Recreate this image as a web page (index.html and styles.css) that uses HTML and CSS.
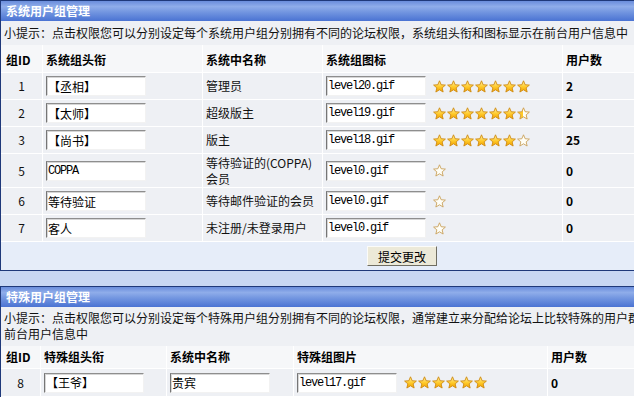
FILE: index.html
```html
<!DOCTYPE html>
<html lang="zh-CN">
<head>
<meta charset="utf-8">
<title>用户组管理</title>
<link rel="stylesheet" href="styles.css">
</head>
<body>
<svg class="defs" width="0" height="0" aria-hidden="true">
  <defs>
    <linearGradient id="g-gold" x1="0" y1="0" x2="0" y2="1">
      <stop offset="0" stop-color="#fff3a6"/>
      <stop offset="0.55" stop-color="#ffc928"/>
      <stop offset="1" stop-color="#f0a000"/>
    </linearGradient>
    <linearGradient id="g-half" x1="0" y1="0" x2="1" y2="0">
      <stop offset="0.5" stop-color="#ffc928"/>
      <stop offset="0.5" stop-color="#fffef6"/>
    </linearGradient>
    <symbol id="star-full" viewBox="0 0 13 13">
      <polygon points="6.5,0.8 8.15,4.73 12.4,5.08 9.16,7.87 10.14,12.02 6.5,9.8 2.86,12.02 3.84,7.87 0.6,5.08 4.85,4.73" fill="url(#g-gold)" stroke="#cf8a10" stroke-width="0.9" stroke-linejoin="round"/>
    </symbol>
    <symbol id="star-half" viewBox="0 0 13 13">
      <polygon points="6.5,0.8 8.15,4.73 12.4,5.08 9.16,7.87 10.14,12.02 6.5,9.8 2.86,12.02 3.84,7.87 0.6,5.08 4.85,4.73" fill="url(#g-half)" stroke="#cf9a40" stroke-width="0.9" stroke-linejoin="round"/>
    </symbol>
    <symbol id="star-empty" viewBox="0 0 13 13">
      <polygon points="6.5,0.8 8.15,4.73 12.4,5.08 9.16,7.87 10.14,12.02 6.5,9.8 2.86,12.02 3.84,7.87 0.6,5.08 4.85,4.73" fill="#fffef6" stroke="#c9a25a" stroke-width="0.9" stroke-linejoin="round"/>
    </symbol>
  </defs>
</svg>

<section class="panel">
  <h2 class="panel-title">系统用户组管理</h2>
  <p class="tip">小提示：点击权限您可以分别设定每个系统用户组分别拥有不同的论坛权限，系统组头衔和图标显示在前台用户信息中</p>
  <div class="grid grid-sys">
    <div class="cell th th-first">组ID</div>
    <div class="cell th">系统组头衔</div>
    <div class="cell th">系统中名称</div>
    <div class="cell th">系统组图标</div>
    <div class="cell th">用户数</div>

    <div class="cell cell-id">1</div>
    <div class="cell"><input class="field" type="text" value="【丞相】"></div>
    <div class="cell">管理员</div>
    <div class="cell"><input class="field field-mono" type="text" value="level20.gif"><span class="stars"><svg class="star"><use href="#star-full"/></svg><svg class="star"><use href="#star-full"/></svg><svg class="star"><use href="#star-full"/></svg><svg class="star"><use href="#star-full"/></svg><svg class="star"><use href="#star-full"/></svg><svg class="star"><use href="#star-full"/></svg><svg class="star"><use href="#star-full"/></svg></span></div>
    <div class="cell cell-num">2</div>

    <div class="cell cell-id">2</div>
    <div class="cell"><input class="field" type="text" value="【太师】"></div>
    <div class="cell">超级版主</div>
    <div class="cell"><input class="field field-mono" type="text" value="level19.gif"><span class="stars"><svg class="star"><use href="#star-full"/></svg><svg class="star"><use href="#star-full"/></svg><svg class="star"><use href="#star-full"/></svg><svg class="star"><use href="#star-full"/></svg><svg class="star"><use href="#star-full"/></svg><svg class="star"><use href="#star-full"/></svg><svg class="star"><use href="#star-half"/></svg></span></div>
    <div class="cell cell-num">2</div>

    <div class="cell cell-id">3</div>
    <div class="cell"><input class="field" type="text" value="【尚书】"></div>
    <div class="cell">版主</div>
    <div class="cell"><input class="field field-mono" type="text" value="level18.gif"><span class="stars"><svg class="star"><use href="#star-full"/></svg><svg class="star"><use href="#star-full"/></svg><svg class="star"><use href="#star-full"/></svg><svg class="star"><use href="#star-full"/></svg><svg class="star"><use href="#star-full"/></svg><svg class="star"><use href="#star-full"/></svg><svg class="star"><use href="#star-empty"/></svg></span></div>
    <div class="cell cell-num">25</div>

    <div class="cell cell-id row-tall">5</div>
    <div class="cell row-tall"><input class="field field-mono" type="text" value="COPPA"></div>
    <div class="cell row-tall">等待验证的(COPPA)会员</div>
    <div class="cell row-tall"><input class="field field-mono" type="text" value="level0.gif"><span class="stars"><svg class="star"><use href="#star-empty"/></svg></span></div>
    <div class="cell cell-num row-tall">0</div>

    <div class="cell cell-id">6</div>
    <div class="cell"><input class="field" type="text" value="等待验证"></div>
    <div class="cell">等待邮件验证的会员</div>
    <div class="cell"><input class="field field-mono" type="text" value="level0.gif"><span class="stars"><svg class="star"><use href="#star-empty"/></svg></span></div>
    <div class="cell cell-num">0</div>

    <div class="cell cell-id">7</div>
    <div class="cell"><input class="field" type="text" value="客人"></div>
    <div class="cell">未注册/未登录用户</div>
    <div class="cell"><input class="field field-mono" type="text" value="level0.gif"><span class="stars"><svg class="star"><use href="#star-empty"/></svg></span></div>
    <div class="cell cell-num">0</div>
  </div>
  <div class="actions"><button class="btn" type="button">提交更改</button></div>
</section>

<section class="panel">
  <h2 class="panel-title">特殊用户组管理</h2>
  <p class="tip tip-multi">小提示：点击权限您可以分别设定每个特殊用户组分别拥有不同的论坛权限，通常建立来分配给论坛上比较特殊的用户群，特殊组头衔和图片同样显示在<br>前台用户信息中</p>
  <div class="grid grid-spec">
    <div class="cell th th-first th-short">组ID</div>
    <div class="cell th th-short">特殊组头衔</div>
    <div class="cell th th-short">系统中名称</div>
    <div class="cell th th-short">特殊组图片</div>
    <div class="cell th th-short">用户数</div>

    <div class="cell cell-id row-spec">8</div>
    <div class="cell row-spec"><input class="field" type="text" value="【王爷】"></div>
    <div class="cell row-spec"><input class="field" type="text" value="贵宾"></div>
    <div class="cell row-spec"><input class="field field-mono" type="text" value="level17.gif"><span class="stars"><svg class="star"><use href="#star-full"/></svg><svg class="star"><use href="#star-full"/></svg><svg class="star"><use href="#star-full"/></svg><svg class="star"><use href="#star-full"/></svg><svg class="star"><use href="#star-full"/></svg><svg class="star"><use href="#star-full"/></svg></span></div>
    <div class="cell cell-num row-spec">0</div>
  </div>
</section>
</body>
</html>
```

FILE: styles.css
```css
html {
  overflow: hidden;
  background: #c8d7f3;
}

body {
  margin: 0;
  font-family: "Noto Sans CJK SC", sans-serif;
  font-size: 12px;
  line-height: 16px;
  color: #000;
}

.defs {
  position: absolute;
  width: 0;
  height: 0;
  overflow: hidden;
}

.panel {
  width: 802px;
  border: 1px solid #1f397a;
  background: #eef0f4;
}

.panel + .panel {
  margin-top: 15px;
}

.panel-title {
  margin: 0;
  height: 20px;
  padding-left: 5px;
  font-size: 12px;
  line-height: 20px;
  font-weight: bold;
  color: #fff;
  background: linear-gradient(180deg, #6a8ddc 0%, #8fadea 28%, #7396e0 55%, #4a73d3 100%);
}

.tip {
  margin: 0;
  height: 24px;
  padding: 0 3px;
  line-height: 24px;
  color: #111;
  background: #eef0f4;
  white-space: nowrap;
}

.tip-multi {
  height: auto;
  padding: 3px 3px 4px;
  line-height: 16px;
}

.grid {
  display: grid;
}

.grid-sys {
  grid-template-columns: 42px 160px 120px 240px 1fr;
}

.grid-spec {
  grid-template-columns: 40px 126px 127px 254px 1fr;
}

.cell {
  box-sizing: border-box;
  display: flex;
  align-items: center;
  gap: 7px;
  height: 27px;
  padding: 0 3px;
  border-right: 1px solid #fff;
  border-bottom: 1px solid #fff;
  background: #eef0f4;
  color: #111;
}

.th {
  height: 28px;
  padding-top: 3px;
  font-weight: bold;
  color: #000;
  background: #f6f7f9;
}

.th-first {
  padding-left: 5px;
}

.th-short {
  height: 23px;
  padding-top: 0;
}

.row-tall {
  height: 34px;
}

.row-spec {
  height: 28px;
}

.cell-id {
  justify-content: center;
}

.cell-num {
  font-weight: bold;
  color: #000;
}

.field {
  box-sizing: border-box;
  flex: none;
  width: 100px;
  height: 20px;
  margin: 0;
  padding: 0 1px;
  border: 1px solid;
  border-color: #8e8e8e #f2f2f2 #f2f2f2 #767676;
  box-shadow: inset 1px 1px 0 #d6d6d6;
  background: #fff;
  font-family: "Noto Sans CJK SC", sans-serif;
  font-size: 12px;
  color: #000;
}

.field-mono {
  font-family: "Liberation Mono", "Noto Sans CJK SC", monospace;
  letter-spacing: -1.2px;
}

.stars {
  display: flex;
  gap: 1px;
}

.star {
  display: block;
  width: 13px;
  height: 13px;
}

.actions {
  display: flex;
  align-items: center;
  justify-content: center;
  height: 28px;
  background: #e6edf9;
}

.btn {
  box-sizing: border-box;
  width: 70px;
  height: 20px;
  padding: 0;
  border: 1px solid;
  border-color: #fbfbf8 #6f6d62 #6f6d62 #fbfbf8;
  background: #ece9d8;
  font-family: "Noto Sans CJK SC", sans-serif;
  font-size: 12px;
  color: #000;
}
```
